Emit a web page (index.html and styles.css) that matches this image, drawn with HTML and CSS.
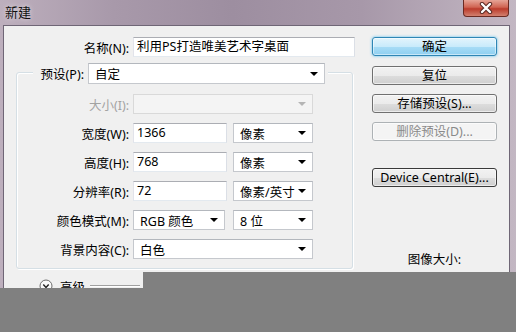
FILE: index.html
```html
<!DOCTYPE html>
<html>
<head>
    <meta charset="utf-8">
    <title>新建</title>
    <link rel="stylesheet" href="styles.css">
</head>
<body>
    <div class="window">
        <div class="titlebar">
            <span class="title">新建</span>
            <div class="close">
                <svg width="18" height="12" viewBox="0 0 18 12">
                    <path d="M5 2 L13 10 M13 2 L5 10" stroke="#5a2a24" stroke-width="4.4" stroke-linecap="round"/>
                    <path d="M5 2 L13 10 M13 2 L5 10" stroke="#ffffff" stroke-width="2.4" stroke-linecap="round"/>
                </svg>
            </div>
        </div>
        <div class="client">
            <div class="form">
                <div class="row">
                    <span class="label name-label">名称(N):</span>
                    <div class="field name-field">利用PS打造唯美艺术字桌面</div>
                </div>
                <div class="group">
                    <div class="group-head">
                        <span class="label head-label">预设(P):</span>
                        <div class="combo preset-combo">自定<span class="arrow"></span></div>
                    </div>
                    <div class="row disabled">
                        <span class="label">大小(I):</span>
                        <div class="combo combo-full combo-disabled"><span></span><span class="arrow"></span></div>
                    </div>
                    <div class="row">
                        <span class="label">宽度(W):</span>
                        <div class="field size-field">1366</div>
                        <div class="combo unit-combo">像素<span class="arrow"></span></div>
                    </div>
                    <div class="row">
                        <span class="label">高度(H):</span>
                        <div class="field size-field">768</div>
                        <div class="combo unit-combo">像素<span class="arrow"></span></div>
                    </div>
                    <div class="row">
                        <span class="label">分辨率(R):</span>
                        <div class="field size-field">72</div>
                        <div class="combo unit-combo">像素/英寸<span class="arrow"></span></div>
                    </div>
                    <div class="row">
                        <span class="label">颜色模式(M):</span>
                        <div class="combo mode-combo">RGB 颜色<span class="arrow"></span></div>
                        <div class="combo unit-combo bits-combo">8 位<span class="arrow"></span></div>
                    </div>
                    <div class="row">
                        <span class="label">背景内容(C):</span>
                        <div class="combo combo-full">白色<span class="arrow"></span></div>
                    </div>
                </div>
                <div class="advanced">
                    <svg width="14" height="14" viewBox="0 0 14 14">
                        <circle cx="7" cy="7" r="6" fill="#fbfbfb" stroke="#6d6d6d"/>
                        <path d="M4.3 5.5 L7 8.5 L9.7 5.5" fill="none" stroke="#222" stroke-width="1.4"/>
                    </svg>
                    <span class="adv-text">高级</span>
                    <span class="adv-line"></span>
                </div>
            </div>
            <div class="side">
                <button class="btn btn-default">确定</button>
                <button class="btn">复位</button>
                <button class="btn">存储预设(S)...</button>
                <button class="btn btn-disabled">删除预设(D)...</button>
                <button class="btn btn-central">Device Central(E)...</button>
                <div class="image-size">图像大小:</div>
            </div>
        </div>
        <div class="shade shade-right"></div>
        <div class="shade shade-bottom"></div>
    </div>
</body>
</html>
```

FILE: styles.css
```css
body {
    margin: 0;
    font-family: "Noto Sans", "Noto Sans CJK SC", sans-serif;
    font-size: 12.5px;
    color: #000;
    background: #b5a7b6;
}
.window {
    position: relative;
    width: 516px;
    height: 332px;
    overflow: hidden;
    background: linear-gradient(to right, #bdafbd 0%, #a899aa 22%, #9d8ea0 45%, #a798a9 70%, #c3b7c3 100%);
}
.titlebar {
    height: 25px;
    display: flex;
    justify-content: space-between;
    align-items: flex-start;
}
.title {
    margin: 4px 0 0 5px;
    font-size: 13px;
    line-height: 16px;
    color: #111;
    text-shadow: 0 0 5px rgba(255, 255, 255, 0.7);
}
.close {
    width: 46px;
    height: 17px;
    margin-right: 7px;
    box-sizing: border-box;
    border: 1px solid #6b2a22;
    border-top: none;
    border-radius: 0 0 4px 4px;
    background: linear-gradient(#e6a496, #d06452 45%, #bb3b2b 55%, #d2806f);
    display: flex;
    justify-content: center;
    align-items: center;
}
.client {
    display: flex;
    height: 307px;
    margin: 0 6px 0 3px;
    box-sizing: border-box;
    border: 1px solid #6f6676;
    border-bottom: none;
    background: #f0f0f0;
    padding-top: 11px;
}
.form {
    flex: none;
    width: 344px;
    padding-left: 12px;
}
.row {
    display: flex;
    align-items: center;
    height: 20px;
}
.label {
    flex: none;
    width: 112px;
    margin-right: 4px;
    text-align: right;
    white-space: nowrap;
}
.name-label {
    width: 113px;
}
.disabled .label {
    color: #a3a3a3;
}
.field {
    height: 20px;
    box-sizing: border-box;
    border: 1px solid;
    border-color: #abadb3 #dbdfe6 #e3e9ef #e2e3ea;
    background: #fff;
    padding-left: 3px;
    line-height: 18px;
    white-space: nowrap;
}
.name-field {
    width: 222px;
}
.size-field {
    width: 94px;
}
.combo {
    display: flex;
    justify-content: space-between;
    align-items: center;
    height: 20px;
    box-sizing: border-box;
    border: 1px solid #c5c8cd;
    border-top-color: #b3b7bd;
    background: #fff;
    padding: 0 6px 0 6px;
    white-space: nowrap;
}
.arrow {
    width: 0;
    height: 0;
    border-left: 4px solid transparent;
    border-right: 4px solid transparent;
    border-top: 4px solid #000;
}
.combo-disabled {
    background: #f4f4f4;
    border-color: #d9d9d9;
}
.combo-disabled .arrow {
    border-top-color: #b5b5b5;
}
.combo-full {
    width: 180px;
}
.unit-combo {
    width: 80px;
    margin-left: 6px;
}
.mode-combo {
    width: 92px;
}
.bits-combo {
    margin-left: 8px;
}
.group {
    width: 337px;
    box-sizing: border-box;
    margin-top: 15px;
    border: 1px solid #d5dfe5;
    border-radius: 3px;
    box-shadow: inset 1px 1px 0 #fff, 1px 1px 0 #fff;
    padding-bottom: 9px;
}
.group-head {
    display: flex;
    align-items: center;
    width: fit-content;
    margin: -10px 0 0 16px;
    padding: 0 3px;
    background: #f0f0f0;
}
.head-label {
    width: 48px;
}
.preset-combo {
    width: 237px;
    height: 21px;
}
.group .row {
    margin-top: 9px;
}
.group .group-head + .row {
    margin-top: 10px;
}
.advanced {
    display: flex;
    align-items: center;
    height: 16px;
    margin: 9px 0 0 23px;
}
.adv-text {
    margin-left: 7px;
}
.adv-line {
    width: 50px;
    margin-left: 5px;
    border-top: 1px solid #a0a0a0;
    border-bottom: 1px solid #fff;
}
.side {
    flex: none;
    width: 125px;
    margin-left: 12px;
    display: flex;
    flex-direction: column;
}
.btn {
    height: 19px;
    padding: 0;
    font: inherit;
    color: #000;
    line-height: 17px;
    border: 1px solid #707070;
    border-radius: 3px;
    background: linear-gradient(#f2f2f2 0%, #ebebeb 50%, #dddddd 51%, #cfcfcf 100%);
    box-shadow: inset 0 0 0 1px rgba(255, 255, 255, 0.6);
    margin-top: 9px;
}
.btn-default {
    margin-top: 0;
    border-color: #2f86b5;
    background: linear-gradient(#e3f4fc 0%, #c9ebfb 50%, #a8dcf6 51%, #8fd0f1 100%);
    box-shadow: inset 0 0 0 1px rgba(255, 255, 255, 0.5), 0 0 3px #58bfee;
}
.btn-default + .btn {
    margin-top: 10px;
}
.btn-disabled {
    border-color: #adb2b5;
    background: #f4f4f4;
    color: #8a8a8a;
}
.btn-central {
    margin-top: 27px;
    border-color: #3a3a3a;
}
.image-size {
    margin-top: 65px;
    text-align: center;
    line-height: 16px;
}
.shade {
    position: absolute;
    background: #808080;
}
.shade-right {
    left: 143px;
    top: 272px;
    right: 0;
    bottom: 0;
}
.shade-bottom {
    left: 0;
    top: 288px;
    right: 0;
    bottom: 0;
}
```
